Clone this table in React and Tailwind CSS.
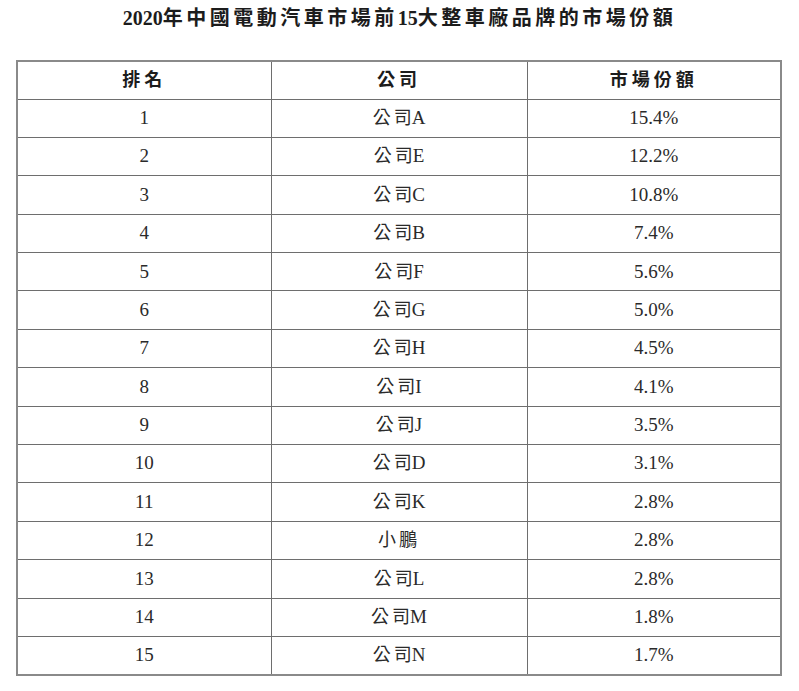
const rows = [
  ['1', 'A', '15.4%'],
  ['2', 'E', '12.2%'],
  ['3', 'C', '10.8%'],
  ['4', 'B', '7.4%'],
  ['5', 'F', '5.6%'],
  ['6', 'G', '5.0%'],
  ['7', 'H', '4.5%'],
  ['8', 'I', '4.1%'],
  ['9', 'J', '3.5%'],
  ['10', 'D', '3.1%'],
  ['11', 'K', '2.8%'],
  ['12', null, '2.8%'],
  ['13', 'L', '2.8%'],
  ['14', 'M', '1.8%'],
  ['15', 'N', '1.7%'],
]

const font = "font-['Liberation_Serif','Noto_Sans_CJK_TC',serif]"

export default function App() {
  return (
    <div className={`w-[799px] h-[691px] bg-white text-[#2a2a2a] ${font}`}>
      <h1 className="pt-[6px] h-[60px] text-center text-[20px] leading-[24px] font-bold text-[#1c1c1c]">
        2020<span className="tracking-[3.5px]">年中國電動汽車市場前</span>15
        <span className="tracking-[3.5px]">大整車廠品牌的市場份額</span>
      </h1>
      <table className="ml-[16px] w-[766px] table-fixed border-collapse border-2 border-[#8a8a8a]">
        <colgroup>
          <col className="w-[254px]" />
          <col className="w-[256px]" />
          <col />
        </colgroup>
        <thead>
          <tr className="h-[38px] text-[18px] font-bold text-[#1c1c1c]">
            <th className="border border-[#6e6e6e] tracking-[4px]">排名</th>
            <th className="border border-[#6e6e6e] tracking-[4px]">公司</th>
            <th className="border border-[#6e6e6e] tracking-[4px]">市場份額</th>
          </tr>
        </thead>
        <tbody>
          {rows.map(([rank, co, share]) => (
            <tr key={rank} className="h-[38.4px] text-[19px]">
              <td className="border border-[#6e6e6e] text-center p-0">{rank}</td>
              <td className="border border-[#6e6e6e] text-center p-0 text-[18px]">
                {co ? (
                  <>
                    <span className="tracking-[3px]">公</span>司<span className="text-[19px]">{co}</span>
                  </>
                ) : (
                  <span className="tracking-[3px]">小鵬</span>
                )}
              </td>
              <td className="border border-[#6e6e6e] text-center p-0">{share}</td>
            </tr>
          ))}
        </tbody>
      </table>
    </div>
  )
}
